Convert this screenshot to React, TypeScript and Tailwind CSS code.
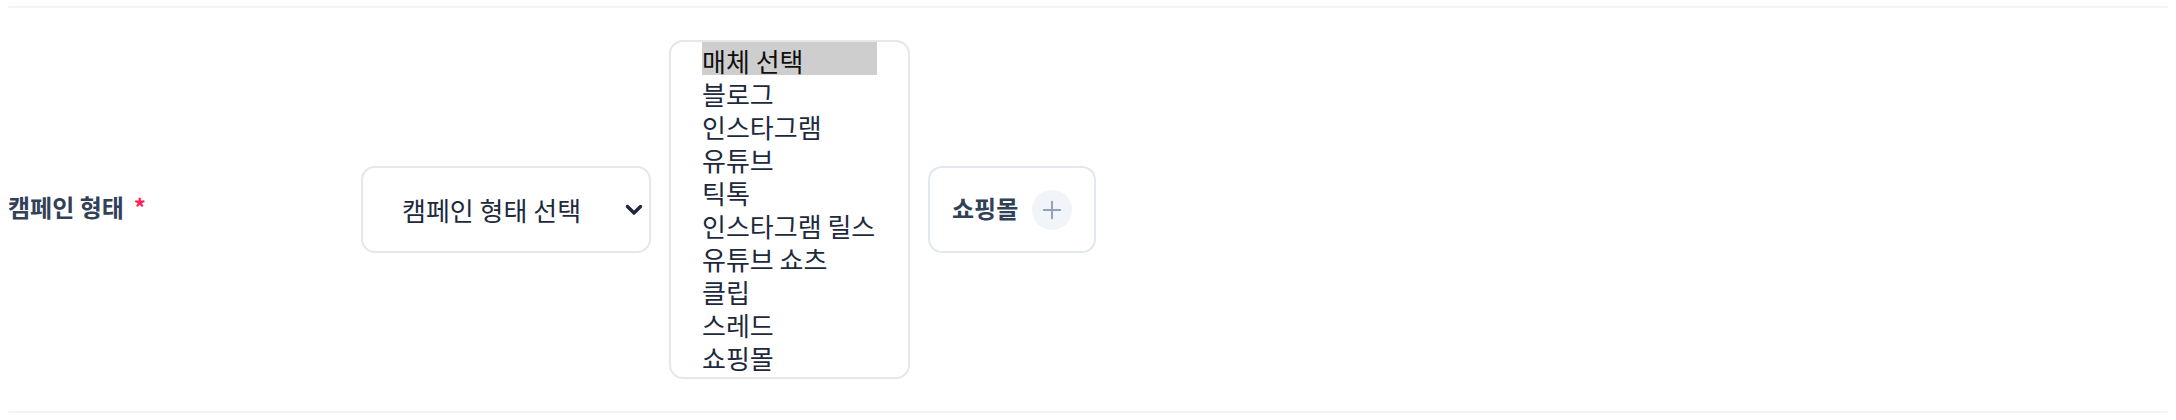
import { Plus } from "lucide-react"

const mediaOptions = [
  "매체 선택",
  "블로그",
  "인스타그램",
  "유튜브",
  "틱톡",
  "인스타그램 릴스",
  "유튜브 쇼츠",
  "클립",
  "스레드",
  "쇼핑몰",
]

function Chevron() {
  return (
    <svg width="18" height="12" viewBox="0 0 18 12" fill="none" className="pointer-events-none absolute right-[8px] top-1/2 -translate-y-1/2">
      <path d="M2.5 2.5L9 9L15.5 2.5" stroke="#1e293b" strokeWidth="3.4" strokeLinecap="round" strokeLinejoin="round" />
    </svg>
  )
}

export default function App() {
  return (
    <div className="min-h-screen bg-white pt-1.5" style={{ fontFamily: '"Noto Sans CJK SC", "Noto Sans CJK KR", sans-serif' }}>
      <div className="mx-2 flex items-center border-y-2 border-slate-100 py-8">
        {/* label column */}
        <div className="flex w-[353px] shrink-0 items-center gap-[10px] pb-[6px] text-[24px] font-bold text-slate-700">
          <span>캠페인 형태</span>
          <span className="text-rose-500">*</span>
        </div>

        <div className="flex items-center gap-[18px]">
          <div className="relative w-[290px]">
            <select
              defaultValue=""
              className="h-[87px] w-full appearance-none rounded-[14px] border-2 border-gray-200 bg-white pl-[39px] pr-10 text-[26px] text-slate-800 outline-none"
            >
              <option value="">캠페인 형태 선택</option>
            </select>
            <Chevron />
          </div>

          <select
            size={10}
            defaultValue="매체 선택"
            className="h-[339px] w-[241px] overflow-hidden rounded-[14px] border-2 border-gray-200 bg-white px-[31px] py-0 text-[26px] text-slate-800 outline-none"
          >
            {mediaOptions.map((opt) => (
              <option key={opt} value={opt} className="h-[33px] leading-[32px] checked:bg-[#cecece]">
                {opt}
              </option>
            ))}
          </select>

          <button className="flex h-[87px] w-[168px] items-center gap-[14px] rounded-[14px] border-2 border-slate-200 bg-white pl-[22px]">
            <span className="pb-1 text-[24px] font-bold text-slate-700">쇼핑몰</span>
            <span className="flex size-10 items-center justify-center rounded-full bg-slate-100">
              <Plus className="size-[28px] text-slate-400" strokeWidth={1.75} />
            </span>
          </button>
        </div>
      </div>
    </div>
  )
}
